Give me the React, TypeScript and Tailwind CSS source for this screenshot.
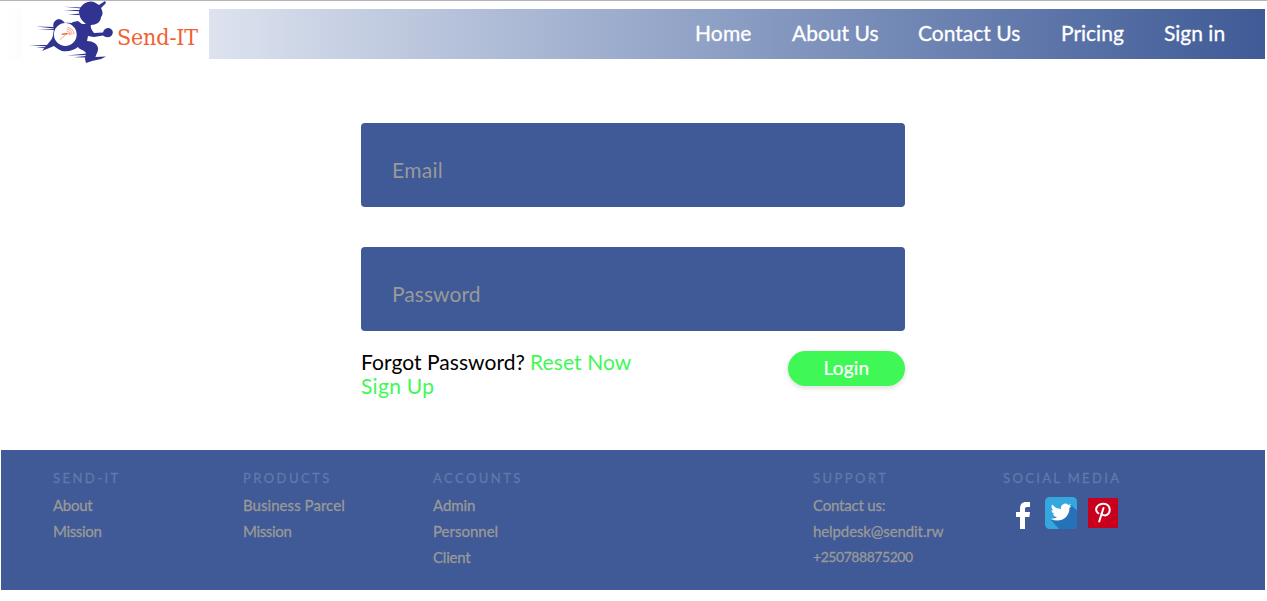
import React from "react";

const navItems = [
  { label: "Home", cls: "w-[57px] tracking-[0.15px]" },
  { label: "About Us", cls: "w-[86px] tracking-[0px]" },
  { label: "Contact Us", cls: "w-[103px] tracking-[0px]" },
  { label: "Pricing", cls: "w-[63px] tracking-[0px]" },
  { label: "Sign in", cls: "w-[61px] tracking-[0px]" },
];

const columns = [
  { title: "SEND-IT", links: [{ t: "About", c: "text-[15px] tracking-[-0.3px]" }, { t: "Mission", c: "text-[15px] tracking-[-0.35px]" }] },
  { title: "PRODUCTS", links: [{ t: "Business Parcel", c: "text-[15px] tracking-[0.05px]" }, { t: "Mission", c: "text-[15px] tracking-[-0.35px]" }] },
  {
    title: "ACCOUNTS",
    links: [
      { t: "Admin", c: "text-[15px] tracking-[-0.1px]" },
      { t: "Personnel", c: "text-[15px]" },
      { t: "Client", c: "text-[15px] tracking-[-0.2px]" },
    ],
  },
  { title: "", links: [] },
  {
    title: "SUPPORT",
    links: [
      { t: "Contact us:", c: "text-[15px] tracking-[-0.2px]" },
      { t: "helpdesk@sendit.rw", c: "text-[15px] tracking-[-0.1px]" },
      { t: "+250788875200", c: "text-[14px] tracking-[-0.45px]" },
    ],
  },
];

function Runner() {
  return (
    <svg viewBox="21 0 96 66" className="h-[66px] w-[96px] shrink-0" aria-hidden="true">
      <g fill="#30338f">
        <path d="M79 11 C81 4 88 0 94 2 L99 5 L105 1 L106 3 L101 8 C103 12 103 15 101 17 C101 22 96 25 91 25 C90 28 92 30 94 33 L103 32.500 C104 29 106 28 109 28 C112 29 113.500 31 112.500 34 C111 38 106 38 103 35.500 L94 37 L88 36 L87 41 C93 41 97.500 44 98 48 C98.500 52 96 54 95.500 57 L106 56.500 L101 59 L92 61 L86 63 L85 59 L86 53 C83 49 80 50 78 47 C74 50 69 52 62 51 C58 49 56 48 54 46 L42 51 L51 40 C53 38 53 34 54 29 C52 24 54 20 59 19 C63 20 63 21 65 23 C70 22 71 24 73 22 L78 21 L82 24 L86 24 C82 21 79 17 79 11Z" />
        <path d="M64 6.700 82 7.500 81 8.500Z M64 10 81 10 81 11.500Z M68 15 80 13.500 79 15Z M36 26.500 55 27 54 28.500Z M38 29 55 29 54 30Z M29 45 51 45 48 46.500Z M36 47.500 48 47 47 48.500Z M67 55.500 87 53.500 87 55Z M74 57.200 86 56 86 57.500Z" />
      </g>
      <circle cx="65.3" cy="34.5" r="11.4" fill="#fff" />
      <g fill="none" stroke="#f26a3f" strokeLinecap="round">
        <path strokeWidth="1.6" d="M62.500 34.300 66.500 33.700" />
        <path strokeWidth=".6" d="M68 33 60 39.500 M67 33.500 70.500 34 M67 29 A5 5 0 0 1 72 34 M67 31 A3 3 0 0 1 70 35 M68 27.500 A7 7 0 0 1 74 34" />
      </g>
    </svg>
  );
}

function Social() {
  return (
    <div className="flex pt-[5px] pl-[9px]">
      <svg viewBox="0 0 32 32" className="size-8" aria-label="Facebook">
        <path fill="#fff" d="M8 32V20H4v-5h4v-3.500C8 7 10.500 5 14 5h4v5h-3c-1.500 0-2 .700-2 2v3h5l-.600 5H13v12Z" />
      </svg>
      <svg viewBox="0 0 32 32" className="ml-[1px] size-8" aria-label="Twitter">
        <rect width="32" height="32" rx="4.500" fill="#35a7df" />
        <path fill="#2672b8" d="M26 8 32 13.500V27.500a4.500 4.500 0 0 1-4.500 4.500H14L6 23Z" />
        <path fill="#fff" transform="translate(5.700 4.700) scale(.87)" d="M23.950 4.570a10 10 0 0 1-2.820.780 4.960 4.960 0 0 0 2.160-2.720c-.950.550-2 .960-3.130 1.180a4.920 4.920 0 0 0-8.380 4.480C7.690 8.100 4.070 6.130 1.640 3.160a4.820 4.820 0 0 0-.670 2.480c0 1.710.870 3.210 2.190 4.100a4.900 4.900 0 0 1-2.230-.620v.060a4.920 4.920 0 0 0 3.950 4.830 5 5 0 0 1-2.210.080 4.940 4.940 0 0 0 4.600 3.420A9.870 9.870 0 0 1 0 19.540a14 14 0 0 0 7.550 2.210c9.060 0 14-7.500 14-13.980 0-.210 0-.420-.020-.630a9.940 9.940 0 0 0 2.460-2.550Z" />
      </svg>
      <svg viewBox="0 0 32 32" className="ml-[10px] size-8" aria-label="Pinterest">
        <rect x="1" y="1" width="30" height="30" rx="1" fill="#c8001e" />
        <g fill="none" stroke="#fff" strokeLinecap="round">
          <path strokeWidth="2" d="M11.300 16.300C6.500 12.500 10.500 6.800 16.500 6.800c8 0 8 11.200 1.500 11.600-1.800 0-3-.800-3.500-1.800" />
          <path strokeWidth="2" d="M16.500 11 12.200 24.500" />
        </g>
      </svg>
    </div>
  );
}

function Field({ label, type, cls }: { label: string; type: string; cls: string }) {
  return (
    <input
      type={type}
      placeholder={label}
      className={`block h-[84px] w-full rounded-[4px] bg-[#3f5a96] pt-[9px] pl-[31px] text-[21px] text-white outline-none placeholder:text-[#999] placeholder:opacity-100 ${cls}`}
    />
  );
}

export default function App() {
  return (
    <div className="h-[601px] overflow-hidden border-t border-[#b5b5b5] bg-white font-['Lato',sans-serif]">
      <header className="mt-[8px] mr-[2px] ml-[1px] flex h-[50px] items-center justify-between bg-linear-to-r from-white to-[#3f5a96]">
        <div className="ml-[20px] flex h-[66px] w-[188px] -translate-y-[1px] items-center bg-white">
          <Runner />
          <span className="pt-[7px] font-['DejaVu_Serif_Condensed','DejaVu_Serif',serif] text-[23px] leading-[30px] tracking-[-0.15px] whitespace-nowrap text-[#f15f34] [font-stretch:condensed]">
            Send-IT
          </span>
        </div>
        <nav className="mr-[40px] flex gap-[40px] pb-[2px]">
          {navItems.map((n) => (
            <a key={n.label} className={`text-[21px] leading-[24px] whitespace-nowrap text-white [-webkit-text-stroke:0.3px] ${n.cls}`}>
              {n.label}
            </a>
          ))}
        </nav>
      </header>

      <main className="mt-[64px] ml-[361px] w-[544px]">
        <form className="flex flex-col gap-[40px]">
          <Field label="Email" type="email" cls="tracking-[0.3px]" />
          <Field label="Password" type="password" cls="tracking-[0.05px]" />
        </form>
        <div className="mt-[19px] flex h-[100px] items-start justify-between">
          <p className="text-[21px] leading-[24px] whitespace-nowrap text-black">
            <span className="inline-block w-[169px] tracking-[0.05px]">Forgot Password? </span>
            <a className="tracking-[0.1px] text-[#3ff855]">Reset Now</a>
            <br />
            <a className="tracking-[0.3px] text-[#3ff855]">Sign Up</a>
          </p>
          <button type="button" className="mt-[1px] h-[35px] w-[117px] rounded-full bg-[#3ff855] pb-[2px] text-[19px] leading-[24px] tracking-[0.2px] text-white shadow-[0_2px_5px_rgba(0,0,0,0.14)] [-webkit-text-stroke:0.2px]">
            Login
          </button>
        </div>
      </main>

      <footer className="mr-[2px] ml-[1px] flex h-[140px] bg-[#3f5a96] pt-[20px] pl-[52px]">
        {columns.map((c, i) => (
          <section key={i} className="w-[190px] shrink-0">
            <h3 className="h-[22px] text-[13px] leading-[16px] tracking-[2.45px] text-[#6179ad] [-webkit-text-stroke:0.3px]">{c.title}</h3>
            {c.links.map((l) => (
              <a key={l.t} className={`block leading-[26px] text-[#999] [-webkit-text-stroke:0.3px] ${l.c}`}>{l.t}</a>
            ))}
          </section>
        ))}
        <section className="shrink-0">
          <h3 className="h-[22px] text-[13px] leading-[16px] tracking-[2.35px] text-[#6179ad] [-webkit-text-stroke:0.3px]">SOCIAL MEDIA</h3>
          <Social />
        </section>
      </footer>
    </div>
  );
}
